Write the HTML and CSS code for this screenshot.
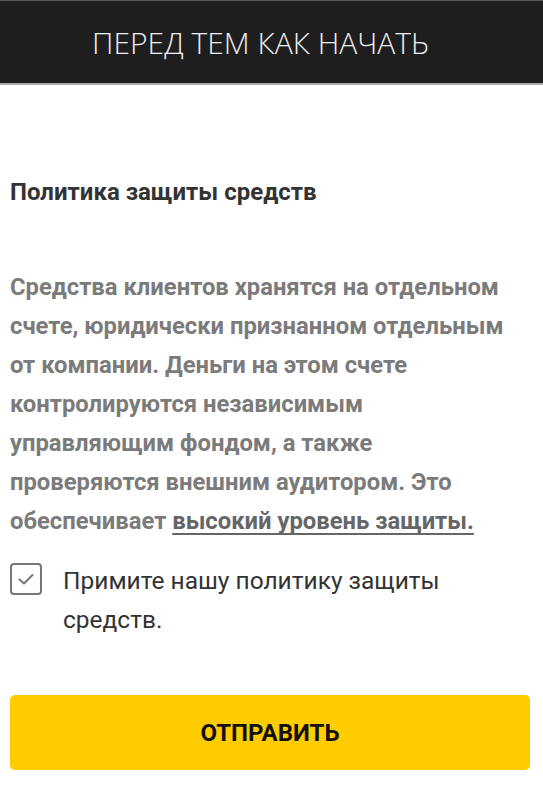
FILE: index.html
```html
<!DOCTYPE html>
<html lang="ru">

<head>
    <meta charset="UTF-8">
    <meta name="viewport" content="width=device-width, initial-scale=1.0">
    <title>Перед тем как начать</title>
    <link rel="stylesheet" href="styles.css">
</head>

<body>
    <header class="topbar">
        <h1>ПЕРЕД ТЕМ КАК НАЧАТЬ</h1>
    </header>

    <main class="content">
        <h2 class="policy-title">Политика защиты средств</h2>

        <p class="policy-text">
            Средства клиентов хранятся на отдельном<br>
            счете, юридически признанном отдельным<br>
            от компании. Деньги на этом счете<br>
            контролируются независимым<br>
            управляющим фондом, а также<br>
            проверяются внешним аудитором. Это<br>
            обеспечивает <a href="#" class="policy-link">высокий уровень защиты.</a>
        </p>

        <label class="agree">
            <span class="checkbox">
                <svg width="20" height="16" viewBox="0 0 20 16">
                    <path d="M3.5 8.5 L8 12.5 L16.5 4" fill="none" stroke="#777" stroke-width="2" stroke-linecap="round" stroke-linejoin="round" />
                </svg>
            </span>
            <span class="agree-text">Примите нашу политику защиты<br>средств.</span>
        </label>

        <button type="button" class="submit">ОТПРАВИТЬ</button>
    </main>
</body>

</html>
```

FILE: styles.css
```css
body {
    margin: 0;
    padding: 0;
    background-color: #fff;
    font-family: Roboto, 'Noto Sans', sans-serif;
}

.topbar {
    background-color: #1e1e1e;
    border-top: 1px solid #555;
    border-bottom: 2px solid #aaa;
    height: 82px;
    display: flex;
    align-items: center;
    justify-content: center;
    padding-right: 22px;
}

.topbar h1 {
    margin: 0;
    font-family: 'Open Sans', sans-serif;
    font-weight: 300;
    font-size: 30px;
    color: #eee;
}

.content {
    padding: 0 13px 0 10px;
}

.policy-title {
    margin: 91px 0 0;
    font-size: 24px;
    font-weight: 700;
    color: #333;
    line-height: 32px;
}

.policy-text {
    margin: 60px 0 0;
    font-size: 23.8px;
    font-weight: 700;
    color: #7b7b7b;
    line-height: 39px;
    white-space: nowrap;
}

.policy-link {
    color: #666;
    text-decoration: underline;
    text-decoration-skip-ink: none;
    text-underline-offset: 4px;
}

.agree {
    display: flex;
    align-items: flex-start;
    gap: 21px;
    margin-top: 22px;
}

.checkbox {
    flex: none;
    width: 28px;
    height: 28px;
    border: 2px solid #777;
    border-radius: 4px;
    display: flex;
    align-items: center;
    justify-content: center;
}

.agree-text {
    font-size: 24.5px;
    color: #333;
    line-height: 39px;
    margin-top: -2px;
}

.submit {
    display: block;
    width: 100%;
    height: 75px;
    margin-top: 56px;
    background-color: #ffcc00;
    color: #111;
    border: none;
    border-radius: 5px;
    font-family: Roboto, sans-serif;
    font-size: 24px;
    font-weight: 700;
    cursor: pointer;
}
```
